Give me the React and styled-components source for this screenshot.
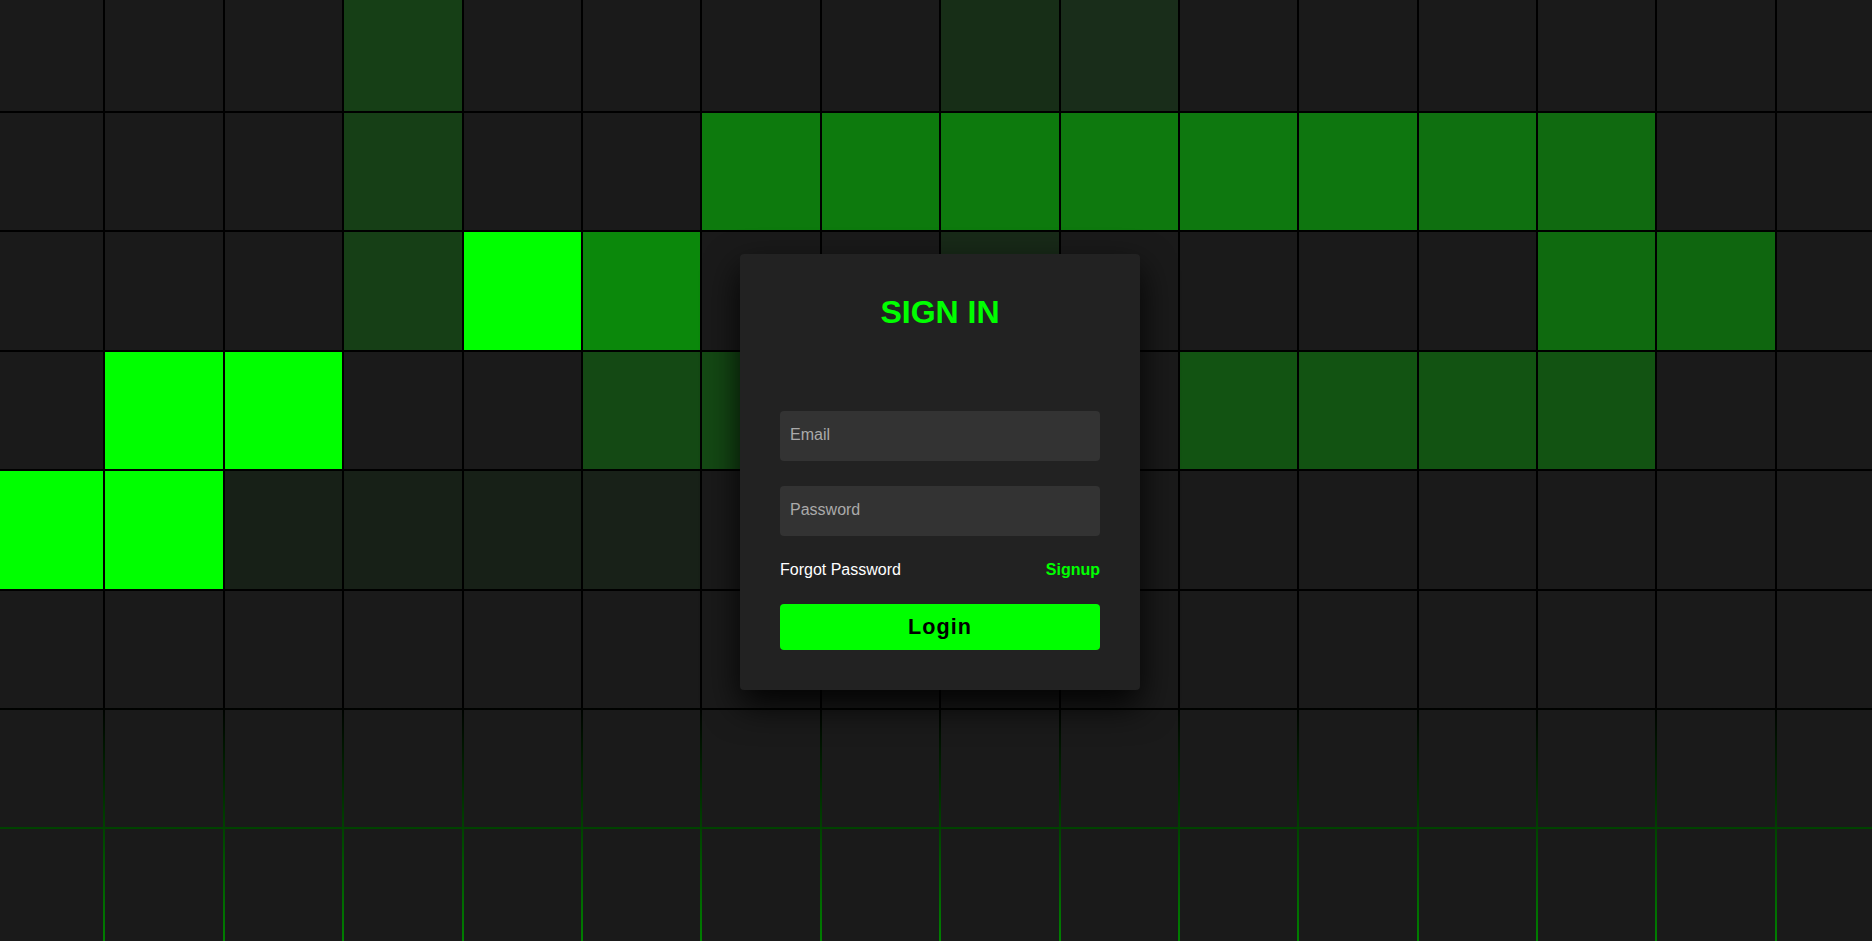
import React from 'react';
import styled, { createGlobalStyle } from 'styled-components';

const COLS = 17;
const ROWS = 9;

// cells still glowing from the hover trail, keyed row-col
const trail = {
  '0-3': '#163f16',
  '0-8': '#172e17',
  '0-9': '#192d1a',
  '1-3': '#163f16',
  '1-6': '#0d7a0d',
  '1-7': '#0d7a0d',
  '1-8': '#0d7a0d',
  '1-9': '#0e790e',
  '1-10': '#0e780f',
  '1-11': '#0e760f',
  '1-12': '#0f7010',
  '1-13': '#106a10',
  '2-3': '#163f16',
  '2-4': '#00ff00',
  '2-5': '#0b880b',
  '2-8': '#182a18',
  '2-13': '#0f6a0f',
  '2-14': '#0f660f',
  '3-1': '#00ff00',
  '3-2': '#00ff00',
  '3-5': '#144914',
  '3-6': '#144914',
  '3-10': '#125312',
  '3-11': '#125312',
  '3-12': '#125312',
  '3-13': '#125312',
  '4-0': '#00ff00',
  '4-1': '#00ff00',
  '4-2': '#172017',
  '4-3': '#172017',
  '4-4': '#172017',
  '4-5': '#182118',
};

const GlobalStyle = createGlobalStyle`
  * {
    box-sizing: border-box;
  }
  body {
    margin: 0;
    background: #000;
    font-family: 'Liberation Sans', Arial, sans-serif;
  }
`;

const Page = styled.section`
  position: fixed;
  inset: 0;
  overflow: hidden;
  background: linear-gradient(to bottom, #000 0px, #000 705px, #0f0 1175px);
`;

const Grid = styled.div`
  display: grid;
  grid-template-columns: repeat(${COLS}, 117.4px);
  grid-auto-rows: 117.4px;
  gap: 2px;
  width: max-content;
  margin: -6.4px 0 0 -14px;
`;

const Cell = styled.span`
  display: block;
  background: ${(p) => p.$color || '#1a1a1a'};
`;

const Overlay = styled.div`
  position: absolute;
  inset: 0;
  display: flex;
  align-items: center;
  justify-content: center;
  padding: 2px 0 0 8px;
`;

const Card = styled.div`
  width: 400px;
  padding: 40px;
  background: #222;
  border-radius: 4px;
  box-shadow: 0 15px 35px rgba(0, 0, 0, 0.9);
`;

const Title = styled.h2`
  margin: 0 0 80px;
  font-size: 32px;
  font-weight: 700;
  color: #0f0;
  text-align: center;
  text-transform: uppercase;
`;

const Form = styled.form`
  display: flex;
  flex-direction: column;
  gap: 25px;
`;

const Input = styled.input`
  width: 100%;
  padding: 15px 10px 17px;
  border: none;
  outline: none;
  border-radius: 4px;
  background: #333;
  color: #fff;
  font-family: inherit;
  font-size: 16px;
  line-height: 18px;

  &::placeholder {
    color: #aaa;
  }
`;

const Links = styled.div`
  display: flex;
  justify-content: space-between;
  font-size: 16px;
`;

const Link = styled.a`
  color: ${(p) => (p.$accent ? '#0f0' : '#fff')};
  font-weight: ${(p) => (p.$accent ? 700 : 400)};
  text-decoration: none;
  cursor: pointer;
`;

const Submit = styled.button`
  width: 100%;
  padding: 10px;
  border: none;
  border-radius: 4px;
  background: #0f0;
  color: #000;
  font-family: inherit;
  font-size: 21.6px;
  font-weight: 700;
  line-height: 26px;
  letter-spacing: 0.05em;
  cursor: pointer;
`;

const App = () => {
  const cells = [];
  for (let r = 0; r < ROWS; r++) {
    for (let c = 0; c < COLS; c++) {
      cells.push(<Cell key={`${r}-${c}`} $color={trail[`${r}-${c}`]} />);
    }
  }

  return (
    <>
      <GlobalStyle />
      <Page>
        <Grid>{cells}</Grid>
        <Overlay>
          <Card>
            <Title>Sign In</Title>
            <Form onSubmit={(e) => e.preventDefault()}>
              <Input type='email' placeholder='Email' />
              <Input type='password' placeholder='Password' />
              <Links>
                <Link>Forgot Password</Link>
                <Link $accent>Signup</Link>
              </Links>
              <Submit type='submit'>Login</Submit>
            </Form>
          </Card>
        </Overlay>
      </Page>
    </>
  );
};

export default App;
